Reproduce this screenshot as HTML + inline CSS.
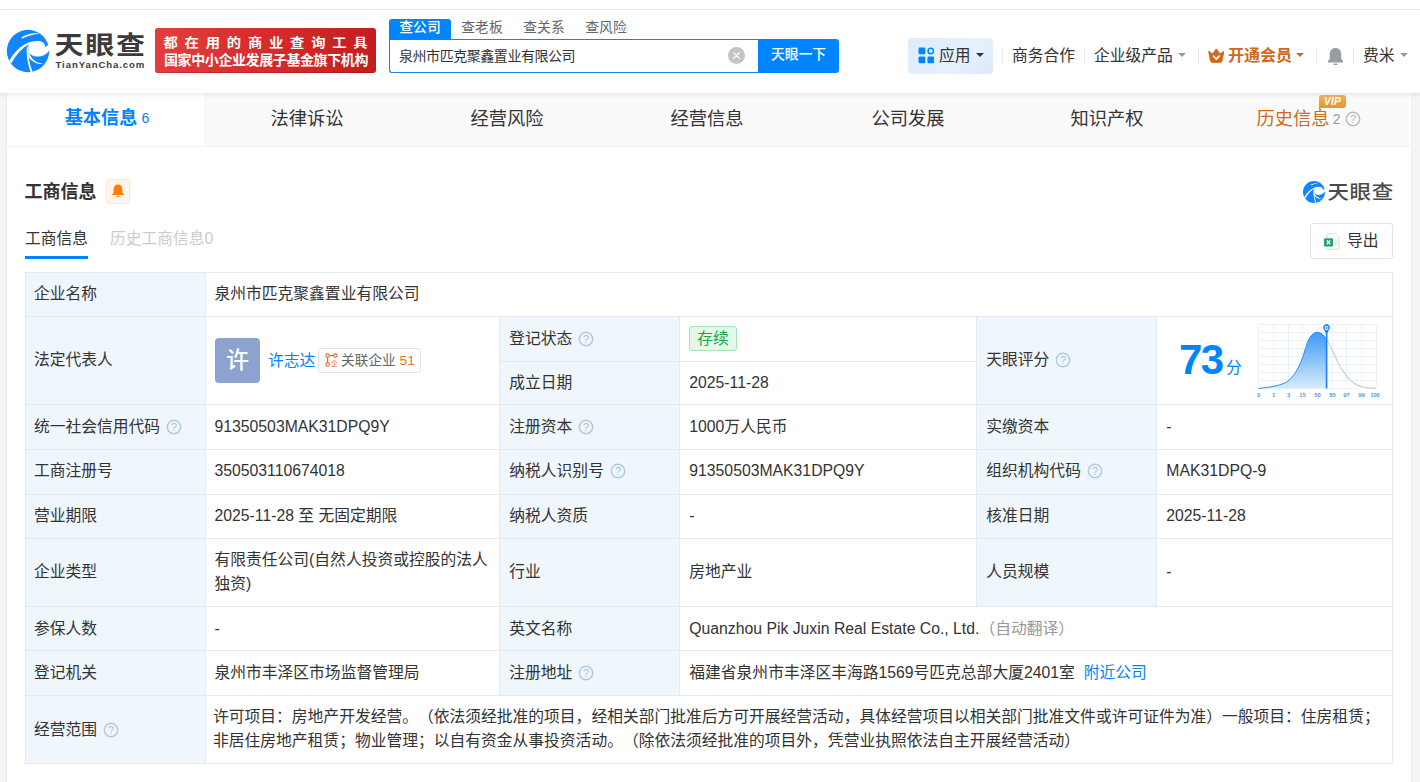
<!DOCTYPE html>
<html lang="zh-CN">
<head>
<meta charset="utf-8">
<title>泉州市匹克聚鑫置业有限公司 - 天眼查</title>
<style>
*{box-sizing:border-box;margin:0;padding:0}
html,body{width:1420px;height:782px;overflow:hidden}
body{position:relative;background:#f5f5f5;color:#333;font-family:"Liberation Sans","Noto Sans CJK SC",sans-serif;font-size:15.78px;line-height:24px;text-spacing-trim:space-all}
a{text-decoration:none;color:#0084ff}
.abs{position:absolute}
/* ---------- top strip & header ---------- */
#topstrip{position:absolute;left:0;top:0;width:1420px;height:10px;background:#fff;border-bottom:1px solid #e6e6e6}
#header{position:absolute;left:0;top:10px;width:1420px;height:83px;background:#fff;box-shadow:0 2px 4px rgba(0,0,0,.08);z-index:5}
#logo{position:absolute;left:7px;top:20px;width:140px;height:42px}
#banner{position:absolute;left:155px;top:18px;width:221px;height:45px;border-radius:3px;background:linear-gradient(90deg,#e33e3e 0%,#d42a2a 55%,#c51d1d 100%);color:#fff;font-weight:bold;white-space:nowrap;overflow:hidden;box-shadow:inset 0 -1px 0 rgba(110,0,0,.22)}
#banner .l1{position:absolute;left:8.5px;top:2.7px;font-size:14.3px;line-height:22px;letter-spacing:6.8px;transform:scaleY(.9);transform-origin:0 55%}
#banner .l2{position:absolute;left:9px;top:21.4px;font-size:14px;line-height:22px;letter-spacing:-0.4px}
#stabs{position:absolute;left:389px;top:9px;height:20px;white-space:nowrap;font-size:13.8px;line-height:18px;color:#666}
#stabs span{display:inline-block;width:62px;text-align:center;height:20px;vertical-align:top}
#stabs span.on{background:#0084ff;color:#fff;border-radius:3px 3px 0 0;font-weight:500}
#sinput{position:absolute;left:389px;top:29px;width:370px;height:34px;border:1px solid #1781ec;border-right:0;border-radius:0 0 0 3px;background:#fff;font-size:14px;line-height:32px;padding-left:9px;color:#333;letter-spacing:-0.45px}
#sclear{position:absolute;left:728px;top:37px;width:17px;height:17px}
#sbtn{position:absolute;left:758px;top:29px;width:81px;height:34px;background:#0084ff;color:#fff;border-radius:0 3px 3px 0;font-size:13.8px;line-height:32px;text-align:center;font-weight:500}
#nav{position:absolute;left:0;top:0;font-size:15.78px;line-height:24px;color:#333;white-space:nowrap}
#nav .it{position:absolute;top:34px;height:24px;line-height:24px}
#nav .sep{position:absolute;top:39px;width:1px;height:14px;background:#e8e8e8}
#nav .car{position:absolute;top:43px;width:0;height:0;border-left:4px solid transparent;border-right:4px solid transparent;border-top:4px solid #999}
#app{position:absolute;left:908px;top:28px;width:85px;height:36px;border-radius:4px;background:linear-gradient(135deg,#dcebfb 0%,#e6f1fd 60%,#dbe9f9 100%)}
/* ---------- panel ---------- */
#panel{position:absolute;left:7px;top:93px;width:1404px;height:689px;background:#fff;box-shadow:-1px 0 0 #ececec,1px 0 0 #f0f0f0}
#tabs{position:absolute;left:0;top:0;width:1402.5px;height:54px;background:#fafafa;font-size:18.3px;line-height:51px;white-space:nowrap;border-bottom:1px solid #f3f3f3}
#tabs .t{position:absolute;top:0;height:53px;width:200px;text-align:center;color:#333}
#tabs .t.on{background:#fff;color:#0084ff;font-weight:bold;border-right:1px solid #f3f3f3}
#tabs .t .n{font-size:14px;font-weight:normal;margin-left:4.2px;position:relative;top:-1.5px}
#tabs .hist{color:#cd6a1e}
#tabs .hist .n{color:#999;margin-left:3.2px}
h2#sec{position:absolute;left:17.6px;top:87px;font-size:18px;line-height:24px;font-weight:bold;color:#333}
#bell2{position:absolute;left:99px;top:86px;width:24px;height:25px;border:1px solid #fde6cf;background:#fff5ea;border-radius:3px}
#wm{position:absolute;left:1296px;top:86px;width:92px;height:24px}
#sub{position:absolute;left:18px;top:134px;height:32px;font-size:15.78px;line-height:24px;white-space:nowrap}
#sub .a{position:absolute;left:0;top:0;color:#333;width:63px;height:32px;border-bottom:3px solid #0084ff}
#sub .b{position:absolute;left:85px;top:0;color:#ccc}
#export{position:absolute;left:1303px;top:130px;width:83px;height:36px;border:1px solid #dfe3e8;border-radius:3px;background:#fff;font-size:15.78px;line-height:34px;color:#333}
/* ---------- table ---------- */
table#info{position:absolute;left:18px;top:179px;width:1367px;border-collapse:collapse;table-layout:fixed;font-size:15.78px;line-height:23.67px;color:#333}
#info td{border:1px solid #e2ebf3;padding:0 8px 1px 8px;vertical-align:middle;background:#fff;overflow:hidden}
#info td.k{background:#eff6fc}
#info tr.up1 td{padding-bottom:3px}
#info tr.dn1 td{padding-top:1px;padding-bottom:0}
#info tr.dn05 td{padding-bottom:0}
#info td.c2{padding-left:8.5px}
#info td.c3,#info td.c4,#info td.c5,#info td.c6{padding-left:9.3px}
.q{display:inline-block;width:16px;height:16px;vertical-align:-3px;margin-left:6px}
.tag{display:inline-block;position:relative;top:0px;height:25px;line-height:23px;padding:0 7px;border:1px solid #a5e2b4;background:#e3f8e7;color:#1f9f47;border-radius:3px;font-size:15.78px}
.gray{color:#999}
</style>
</head>
<body>
<div id="topstrip"></div>
<div id="header">
  <div id="logo"><svg width="50" height="50" viewBox="0 0 782 782" style="position:absolute;left:-4px;top:-4.3px">
<circle cx="391" cy="391" r="331" fill="#1186ff"/>
<g fill="#fff">
<path d="M282 184 C350 128,480 100,580 116 C480 126,385 152,300 196Z"/>
<path d="M100 545 C170 415,280 300,425 252 L432 272 C310 325,200 445,132 588Z"/>
<path d="M405 262 C450 235,570 220,625 255 C655 280,662 310,655 338 L700 296 L740 330 L722 378 C690 440,610 480,530 478 C470 476,425 450,402 405 C395 380,392 300,405 262Z"/>
<path d="M376 300 C358 450,392 600,432 722 L462 710 C418 600,392 500,404 400Z"/>
<path d="M404 400 C430 520,540 600,652 588 C570 612,450 580,396 470Z"/>
</g>
</svg>
<div style="position:absolute;left:47.5px;top:0px;font-size:29px;line-height:30px;font-weight:bold;color:#3e3a39;letter-spacing:1.7px;white-space:nowrap;transform:scaleY(.88);transform-origin:0 50%">天眼查</div>
<div style="position:absolute;left:48.5px;top:29.3px;font-size:9.6px;line-height:12px;font-weight:bold;color:#3e3a39;letter-spacing:.9px;white-space:nowrap">TianYanCha.com</div></div>
  <div id="banner"><div class="l1">都在用的商业查询工具</div><div class="l2">国家中小企业发展子基金旗下机构</div></div>
  <div id="stabs"><span class="on">查公司</span><span>查老板</span><span>查关系</span><span>查风险</span></div>
  <div id="sinput">泉州市匹克聚鑫置业有限公司</div>
  <div id="sclear"><svg width="17" height="17" viewBox="0 0 17 17"><circle cx="8.5" cy="8.5" r="8.5" fill="#c4c4c4"/><path d="M5.6 5.6 L11.4 11.4 M11.4 5.6 L5.6 11.4" stroke="#fff" stroke-width="1.3" stroke-linecap="round"/></svg></div>
  <div id="sbtn">天眼一下</div>
  <div id="nav">
    <div id="app"></div>
    <svg class="abs" style="left:917.7px;top:37.4px" width="16.8" height="16.8" viewBox="0 0 16 16"><rect x="0.5" y="0.5" width="6.5" height="6.5" rx="1.3" fill="#0084ff"/><rect x="0.5" y="9" width="6.5" height="6.5" rx="1.3" fill="#0084ff"/><rect x="9" y="9" width="6.5" height="6.5" rx="1.3" fill="#0084ff"/><circle cx="12.2" cy="3.8" r="2.6" fill="none" stroke="#0084ff" stroke-width="1.5"/></svg>
    <div class="it" style="left:939px">应用</div><i class="car" style="left:976px;border-top-color:#333"></i>
    <i class="sep" style="left:1002px"></i>
    <div class="it" style="left:1012px">商务合作</div>
    <i class="sep" style="left:1084px"></i>
    <div class="it" style="left:1094px">企业级产品</div><i class="car" style="left:1178px"></i>
    <i class="sep" style="left:1198px"></i>
    <svg class="abs" style="left:1207.6px;top:37.6px" width="16.6" height="15.6" viewBox="0 0 16 15"><path d="M.6 3 L4.4 5.6 L8 .8 L11.6 5.6 L15.4 3 L13.7 12.2 C13.5 13.3 12.6 14 11.5 14 L4.5 14 C3.4 14 2.5 13.3 2.3 12.2 Z" fill="#d2691c" stroke="#d2691c" stroke-width=".8" stroke-linejoin="round"/><path d="M5.3 7.8 L8 10.6 L10.7 7.8" fill="none" stroke="#fff" stroke-width="1.7" stroke-linecap="round" stroke-linejoin="round"/></svg>
    <div class="it" style="left:1228px;color:#cf681c;font-weight:bold;font-size:16px">开通会员</div><i class="car" style="left:1296px;border-top-color:#d2691e"></i>
    <i class="sep" style="left:1316px"></i>
    <svg class="abs" style="left:1326.8px;top:36.6px" width="17" height="19" viewBox="0 0 16 18"><path d="M8 1 C4.6 1,2.6 3.6,2.6 7 L2.6 11 L0.8 13.6 L0.8 14.6 L15.2 14.6 L15.2 13.6 L13.4 11 L13.4 7 C13.4 3.6,11.4 1,8 1Z" fill="#999da2"/><rect x="6" y="15.6" width="4" height="1.4" rx=".7" fill="#999da2"/></svg>
    <i class="sep" style="left:1353px"></i>
    <div class="it" style="left:1363px">费米</div><i class="car" style="left:1400px"></i>
  </div>
</div>
<div id="panel">
  <div id="tabs">
    <div class="t on" style="left:0;width:199px;padding-left:2px;font-size:18.15px">基本信息<span class="n">6</span></div>
    <div class="t" style="left:200px">法律诉讼</div>
    <div class="t" style="left:400px">经营风险</div>
    <div class="t" style="left:600px">经营信息</div>
    <div class="t" style="left:801px">公司发展</div>
    <div class="t" style="left:1000px">知识产权</div>
    <div class="t hist" style="left:1201.5px">历史信息<span class="n">2</span><svg class="q" style="margin-left:4px;vertical-align:-2px" viewBox="0 0 16 16"><circle cx="8" cy="8" r="6.7" fill="none" stroke="#b9bcc2" stroke-width="1.45"/><text x="8" y="12" font-size="11" text-anchor="middle" fill="#b0b4ba" font-family="Liberation Sans, sans-serif">?</text></svg></div>
    <div class="abs" style="left:1312px;top:2px;width:27px;height:13px;background:linear-gradient(180deg,#f2b15c,#e8932f);border-radius:3px 3px 3px 0;color:#fff;font-size:10px;line-height:13px;font-weight:bold;font-style:italic;text-align:center;letter-spacing:.3px">VIP</div>
    <div class="abs" style="left:1312px;top:14px;width:0;height:0;border-top:3px solid #e38f2c;border-right:3px solid transparent"></div>
  </div>
  <h2 id="sec">工商信息</h2>
  <div id="bell2"><svg width="22" height="22" viewBox="0 0 22 22"><path d="M11 4.4 C8.2 4.4,6.6 6.5,6.6 9.2 L6.6 12.4 L5.3 14.3 L5.3 15 L16.7 15 L16.7 14.3 L15.4 12.4 L15.4 9.2 C15.4 6.5,13.8 4.4,11 4.4Z" fill="#ff7d00"/><rect x="9.4" y="15.8" width="3.2" height="1.3" rx=".6" fill="#ff7d00"/></svg></div>
  <div id="wm"><svg width="26" height="26" viewBox="0 0 782 782" style="position:absolute;left:-2px;top:-0.5px"><circle cx="391" cy="391" r="331" fill="#1186ff"/>
<g fill="#fff">
<path d="M282 184 C350 128,480 100,580 116 C480 126,385 152,300 196Z"/>
<path d="M100 545 C170 415,280 300,425 252 L432 272 C310 325,200 445,132 588Z"/>
<path d="M405 262 C450 235,570 220,625 255 C655 280,662 310,655 338 L700 296 L740 330 L722 378 C690 440,610 480,530 478 C470 476,425 450,402 405 C395 380,392 300,405 262Z"/>
<path d="M376 300 C358 450,392 600,432 722 L462 710 C418 600,392 500,404 400Z"/>
<path d="M404 400 C430 520,540 600,652 588 C570 612,450 580,396 470Z"/>
</g></svg><div style="position:absolute;left:24.5px;top:2px;font-size:21.5px;line-height:24px;font-weight:500;color:#4a4a4a;letter-spacing:.6px;white-space:nowrap;transform:scaleY(.9);transform-origin:0 50%">天眼查</div></div>
  <div id="sub"><div class="a">工商信息</div><div class="b">历史工商信息0</div></div>
  <div id="export"><svg class="abs" style="left:13.3px;top:8.6px" width="16" height="17" viewBox="0 0 17 18"><path d="M4 .8 H12 L16 4.8 V16.2 Q16 17.2 15 17.2 H4 Q3 17.2 3 16.2 V1.8 Q3 .8 4 .8Z" fill="#fff" stroke="#d8d8d8" stroke-width="1"/><path d="M11.6 7.5h3M11.6 10h3M11.6 12.5h3" stroke="#cfe5d6" stroke-width="1.2"/><rect x="0" y="5.6" width="9.6" height="8.6" rx="1" fill="#1fa463"/><path d="M3 7.8 L6.6 12 M6.6 7.8 L3 12" stroke="#fff" stroke-width="1.5"/></svg><span class="abs" style="left:36px;top:0">导出</span></div>
  <table id="info">
    <colgroup><col style="width:180px"><col style="width:294px"><col style="width:180px"><col style="width:297px"><col style="width:180px"><col style="width:236px"></colgroup>
    <tr style="height:44px"><td class="k c1">企业名称</td><td class="c2" colspan="5">泉州市匹克聚鑫置业有限公司</td></tr>
    <tr style="height:45px"><td class="k c1" rowspan="2">法定代表人</td><td class="c2" rowspan="2" style="position:relative"><div class="abs" style="left:9px;top:21px;width:45px;height:45px;border-radius:4px;background:#8ca2cf;color:#fff;font-size:23px;font-weight:500;line-height:44px;text-align:center">许</div><a class="abs" style="left:62px;top:32px">许志达</a><div class="abs" style="left:112px;top:31px;width:103px;height:25px;border:1px solid #e0e5ec;border-radius:3px;font-size:13.7px;line-height:23px;color:#666;padding-left:6px;white-space:nowrap"><svg style="vertical-align:-2px;margin-right:3px" width="13" height="14" viewBox="0 0 13 14"><g fill="none" stroke="#e0762a" stroke-width="1.2"><circle cx="2.6" cy="2.6" r="1.8"/><circle cx="10.4" cy="2.6" r="1.8"/><circle cx="2.6" cy="11.4" r="1.8"/><path d="M4.4 2.6H8.6M2.6 4.4V9.6"/></g><text x="9.3" y="13" font-size="7" text-anchor="middle" fill="#e0762a" font-family="Noto Sans CJK SC, sans-serif">企</text></svg>关联企业 <span style="color:#e0762a">51</span></div></td><td class="k c3">登记状态<svg class="q" viewBox="0 0 16 16"><circle cx="8" cy="8" r="6.7" fill="none" stroke="#b1c9e1" stroke-width="1.45"/><text x="8" y="12" font-size="11" text-anchor="middle" fill="#a9c3dd" font-family="Liberation Sans, sans-serif">?</text></svg></td><td class="c4"><span class="tag">存续</span></td><td class="k c5" rowspan="2">天眼评分<svg class="q" viewBox="0 0 16 16"><circle cx="8" cy="8" r="6.7" fill="none" stroke="#b1c9e1" stroke-width="1.45"/><text x="8" y="12" font-size="11" text-anchor="middle" fill="#a9c3dd" font-family="Liberation Sans, sans-serif">?</text></svg></td><td class="c6" rowspan="2" style="position:relative;padding:0"><div class="abs" style="left:22px;top:20px;font-size:42px;line-height:46px;font-weight:bold;color:#0084ff;letter-spacing:-1.5px">73</div><div class="abs" style="left:69px;top:39px;font-size:15.78px;line-height:24px;color:#0084ff">分</div><svg class="abs" style="left:95px;top:0.5px" width="130" height="84" viewBox="0 0 130 84">
<defs><linearGradient id="g1" x1="0" y1="0" x2="0" y2="1"><stop offset="0" stop-color="#3b9bf5"/><stop offset="1" stop-color="#d9ebfd"/></linearGradient></defs>
<g stroke="#e9f1f9" stroke-width="1" fill="none">
<path d="M6.5 6.5H124.5M6.5 14.5H124.5M6.5 22.5H124.5M6.5 30.5H124.5M6.5 38.5H124.5M6.5 46.5H124.5M6.5 54.5H124.5M6.5 62.5H124.5M6.5 70.5H124.5"/>
<path d="M6.5 6.5V70.5M21.5 6.5V70.5M36.5 6.5V70.5M50.5 6.5V70.5M65.5 6.5V70.5M80.5 6.5V70.5M94.5 6.5V70.5M109.5 6.5V70.5M124.5 6.5V70.5"/></g>
<path d="M6.5 70.5 C8.9 70.2,17.2 69.2,21.1 68.4 C25.0 67.7,27.4 67.0,30.0 66.0 C32.6 65.0,34.8 64.2,37.0 62.3 C39.2 60.4,41.5 57.7,43.5 54.5 C45.5 51.3,47.7 46.9,49.3 43.1 C50.9 39.4,51.8 35.4,53.0 32.0 C54.2 28.6,55.1 25.0,56.3 22.5 C57.5 20.0,58.5 18.2,60.0 16.8 C61.5 15.4,63.4 14.4,65.1 14.3 C66.8 14.2,68.4 14.9,70.0 16.0 C71.6 17.1,73.8 20.2,74.6 21.0 V70.5Z" fill="url(#g1)"/>
<path d="M74.6 21.0 C75.2 22.2,77.1 25.7,78.5 28.5 C79.9 31.3,81.4 34.8,82.8 37.8 C84.2 40.8,85.5 43.8,87.0 46.5 C88.5 49.2,90.1 51.7,91.6 53.9 C93.1 56.1,94.5 58.1,96.0 59.8 C97.5 61.5,98.9 62.8,100.4 64.0 C101.9 65.2,103.5 66.2,105.0 66.9 C106.5 67.7,107.4 68.0,109.2 68.5 C111.0 69.0,113.5 69.5,116.0 69.8 C118.5 70.1,122.8 70.3,124.2 70.4" fill="none" stroke="#c6d0da" stroke-width="1.2"/>
<path d="M6.5 70.5 C8.9 70.2,17.2 69.2,21.1 68.4 C25.0 67.7,27.4 67.0,30.0 66.0 C32.6 65.0,34.8 64.2,37.0 62.3 C39.2 60.4,41.5 57.7,43.5 54.5 C45.5 51.3,47.7 46.9,49.3 43.1 C50.9 39.4,51.8 35.4,53.0 32.0 C54.2 28.6,55.1 25.0,56.3 22.5 C57.5 20.0,58.5 18.2,60.0 16.8 C61.5 15.4,63.4 14.4,65.1 14.3 C66.8 14.2,68.4 14.9,70.0 16.0 C71.6 17.1,73.8 20.2,74.6 21.0" fill="none" stroke="#2a8ff0" stroke-width="1"/>
<path d="M74.6 14 V70.5" stroke="#1e86ee" stroke-width="1.7"/>
<path d="M74.6 16.5 L72 11.6 A3.3 3.3 0 1 1 77.2 11.6Z" fill="#1e86ee"/><circle cx="74.6" cy="10" r="1.9" fill="#fff"/><circle cx="74.6" cy="10" r=".9" fill="#1e86ee"/>
<g font-size="5.8" font-weight="bold" fill="#4a9bf0" text-anchor="middle" font-family="Liberation Sans, sans-serif"><text x="6.5" y="78.5">0</text><text x="21.5" y="78.5">1</text><text x="36.5" y="78.5">3</text><text x="50.5" y="78.5">15</text><text x="65.5" y="78.5">50</text><text x="80.5" y="78.5">85</text><text x="94.5" y="78.5">97</text><text x="109.5" y="78.5">99</text><text x="123" y="78.5">100</text></g>
</svg></td></tr>
    <tr class="dn05" style="height:43px"><td class="k c3">成立日期</td><td class="c4">2025-11-28</td></tr>
    <tr style="height:45px"><td class="k c1">统一社会信用代码<svg class="q" viewBox="0 0 16 16"><circle cx="8" cy="8" r="6.7" fill="none" stroke="#b1c9e1" stroke-width="1.45"/><text x="8" y="12" font-size="11" text-anchor="middle" fill="#a9c3dd" font-family="Liberation Sans, sans-serif">?</text></svg></td><td class="c2">91350503MAK31DPQ9Y</td><td class="k c3">注册资本<svg class="q" viewBox="0 0 16 16"><circle cx="8" cy="8" r="6.7" fill="none" stroke="#b1c9e1" stroke-width="1.45"/><text x="8" y="12" font-size="11" text-anchor="middle" fill="#a9c3dd" font-family="Liberation Sans, sans-serif">?</text></svg></td><td class="c4">1000万人民币</td><td class="k c5">实缴资本</td><td class="c6">-</td></tr>
    <tr class="up1" style="height:45px"><td class="k c1">工商注册号</td><td class="c2">350503110674018</td><td class="k c3">纳税人识别号<svg class="q" viewBox="0 0 16 16"><circle cx="8" cy="8" r="6.7" fill="none" stroke="#b1c9e1" stroke-width="1.45"/><text x="8" y="12" font-size="11" text-anchor="middle" fill="#a9c3dd" font-family="Liberation Sans, sans-serif">?</text></svg></td><td class="c4">91350503MAK31DPQ9Y</td><td class="k c5">组织机构代码<svg class="q" viewBox="0 0 16 16"><circle cx="8" cy="8" r="6.7" fill="none" stroke="#b1c9e1" stroke-width="1.45"/><text x="8" y="12" font-size="11" text-anchor="middle" fill="#a9c3dd" font-family="Liberation Sans, sans-serif">?</text></svg></td><td class="c6">MAK31DPQ-9</td></tr>
    <tr style="height:44px"><td class="k c1">营业期限</td><td class="c2">2025-11-28 至 无固定期限</td><td class="k c3">纳税人资质</td><td class="c4">-</td><td class="k c5">核准日期</td><td class="c6">2025-11-28</td></tr>
    <tr style="height:68px"><td class="k c1">企业类型</td><td class="c2"><span style="white-space:nowrap">有限责任公司(自然人投资或控股的法人</span><br>独资)</td><td class="k c3">行业</td><td class="c4">房地产业</td><td class="k c5">人员规模</td><td class="c6">-</td></tr>
    <tr class="dn1" style="height:44px"><td class="k c1">参保人数</td><td class="c2">-</td><td class="k c3">英文名称</td><td class="c4" colspan="3">Quanzhou Pik Juxin Real Estate Co., Ltd.<span class="gray">（自动翻译）</span></td></tr>
    <tr style="height:45px"><td class="k c1">登记机关</td><td class="c2">泉州市丰泽区市场监督管理局</td><td class="k c3">注册地址<svg class="q" viewBox="0 0 16 16"><circle cx="8" cy="8" r="6.7" fill="none" stroke="#b1c9e1" stroke-width="1.45"/><text x="8" y="12" font-size="11" text-anchor="middle" fill="#a9c3dd" font-family="Liberation Sans, sans-serif">?</text></svg></td><td class="c4" colspan="3">福建省泉州市丰泽区丰海路1569号匹克总部大厦2401室 <a style="margin-left:4.5px">附近公司</a></td></tr>
    <tr style="height:68px"><td class="k c1" style="padding-top:1px">经营范围<svg class="q" viewBox="0 0 16 16"><circle cx="8" cy="8" r="6.7" fill="none" stroke="#b1c9e1" stroke-width="1.45"/><text x="8" y="12" font-size="11" text-anchor="middle" fill="#a9c3dd" font-family="Liberation Sans, sans-serif">?</text></svg></td><td class="c2" colspan="5" style="padding-left:7px;padding-bottom:2px;white-space:nowrap">许可项目：房地产开发经营。（依法须经批准的项目，经相关部门批准后方可开展经营活动，具体经营项目以相关部门批准文件或许可证件为准）一般项目：住房租赁；<br>非居住房地产租赁；物业管理；以自有资金从事投资活动。（除依法须经批准的项目外，凭营业执照依法自主开展经营活动）</td></tr>
  </table>
</div>
</body>
</html>
